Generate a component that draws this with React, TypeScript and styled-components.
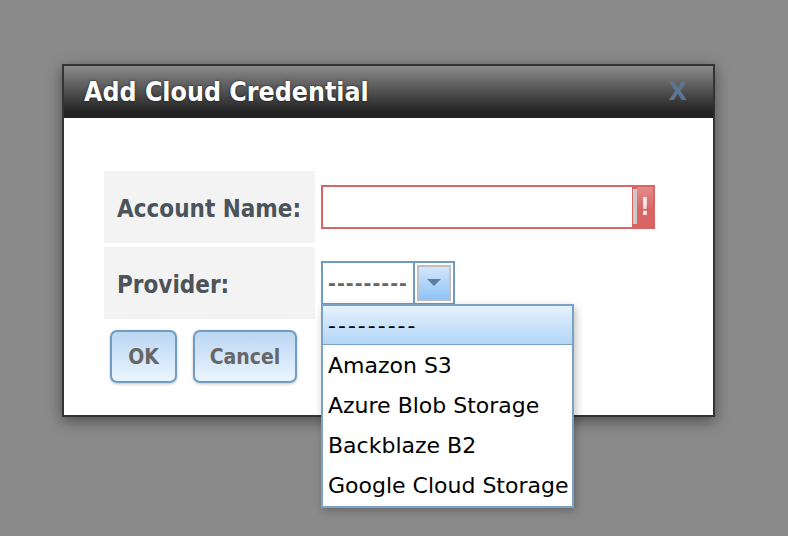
import React from "react";
import styled, { createGlobalStyle } from "styled-components";

const Global = createGlobalStyle`
  html, body { margin: 0; padding: 0; background: #8a8a8a; }
  body { font-family: "DejaVu Sans", Verdana, sans-serif; }
  #root { width: 788px; height: 536px; overflow: hidden; }
`;

const Page = styled.div`
  width: 788px;
  height: 536px;
  background: #8a8a8a;
  padding: 64px 0 0 62px;
  box-sizing: border-box;
`;

const Dialog = styled.div`
  width: 653px;
  height: 353px;
  box-sizing: border-box;
  border: 2px solid #333;
  background: #fff;
  box-shadow: 0 4px 14px rgba(0, 0, 0, 0.45);
  display: flex;
  flex-direction: column;
`;

const TitleBar = styled.div`
  height: 52px;
  flex: none;
  background: linear-gradient(#8a8a8a 0%, #4a4a4a 55%, #232323 88%, #222 100%);
  display: flex;
  align-items: center;
  justify-content: space-between;
  padding: 0 26px 2px 20px;
  box-sizing: border-box;
`;

const Title = styled.h1`
  margin: 0;
  font-family: "DejaVu Sans Condensed", "DejaVu Sans", sans-serif;
  font-weight: bold;
  font-size: 26.5px;
  color: #fff;
  text-shadow: 0 0 2px rgba(0, 0, 0, 0.9);
`;

const Close = styled.span`
  font-family: "DejaVu Sans", sans-serif;
  font-weight: bold;
  font-size: 24px;
  color: #5b7691;
  filter: blur(0.7px);
  margin-top: 2px;
`;

const Body = styled.div`
  flex: 1;
  padding: 53px 0 0 40px;
  position: relative;
`;

const Form = styled.div`
  display: grid;
  grid-template-columns: 211px auto;
  row-gap: 4px;
  align-items: center;
`;

const LabelCell = styled.div`
  background: #f3f3f3;
  height: 72px;
  box-sizing: border-box;
  display: flex;
  align-items: center;
  padding: 3px 0 0 13px;
  font-family: "DejaVu Sans Condensed", "DejaVu Sans", sans-serif;
  font-weight: bold;
  font-size: 24px;
  color: #4b535b;
`;

const FieldCell = styled.div`
  padding-left: 6px;
  height: 72px;
  display: flex;
  align-items: center;
  position: relative;
`;

const TextInput = styled.div`
  width: 334px;
  height: 44px;
  box-sizing: border-box;
  border: 2px solid #d86464;
  display: flex;
  background: #fff;
`;

const InputArea = styled.div`
  flex: 1;
`;

const ErrorTab = styled.div`
  width: 21px;
  background: #d86464;
  display: flex;
  align-items: stretch;
`;

const ErrorGrip = styled.div`
  width: 4px;
  margin: 2px 0 3px 1px;
  background: #c9c9c9;
`;

const ErrorMark = styled.div`
  flex: 1;
  color: #fff;
  font-family: "DejaVu Sans Condensed", "DejaVu Sans", sans-serif;
  font-weight: bold;
  font-size: 24px;
  display: flex;
  align-items: center;
  justify-content: center;
  opacity: 0.85;
  background: linear-gradient(rgba(255,255,255,0.3), rgba(255,255,255,0) 60%);
`;

const SelectBox = styled.div`
  width: 134px;
  height: 44px;
  box-sizing: border-box;
  border: 2px solid #6f9cc0;
  display: flex;
  background: #fff;
  align-self: flex-start;
  margin-top: 14px;
`;

const SelectText = styled.div`
  flex: 1;
  display: flex;
  align-items: center;
  padding-left: 5px;
  font-family: "DejaVu Sans", sans-serif;
  font-weight: bold;
  font-size: 19px;
  color: #666;
  letter-spacing: 1px;
  overflow: hidden;
`;

const SelectButton = styled.div`
  width: 40px;
  border-left: 2px solid #6f9cc0;
  box-sizing: border-box;
  padding: 2px;
  display: flex;
`;

const SelectButtonInner = styled.div`
  flex: 1;
  border: 2px solid #c0c0c0;
  background: linear-gradient(#d4e7fb, #8fc3f7);
  display: flex;
  align-items: center;
  justify-content: center;
`;

const Menu = styled.ul`
  position: absolute;
  left: 6px;
  top: 57px;
  width: 253px;
  box-sizing: border-box;
  margin: 0;
  padding: 0 0 1px 0;
  list-style: none;
  background: #fff;
  border: 2px solid #7aa2c6;
  box-shadow: 2px 3px 8px rgba(0, 0, 0, 0.25);
  z-index: 5;
`;

const MenuItem = styled.li<{ $active?: boolean }>`
  height: ${(p) => (p.$active ? "38px" : "40px")};
  display: flex;
  align-items: center;
  padding-left: 5px;
  font-family: "DejaVu Sans", sans-serif;
  font-size: 22px;
  color: #000;
  white-space: nowrap;
  letter-spacing: ${(p) => (p.$active ? "2px" : "0")};
  background: ${(p) => (p.$active ? "linear-gradient(#e4f1fd, #b3d6f8)" : "#fff")};
  border-bottom: ${(p) => (p.$active ? "1px solid #7aa2c6" : "none")};
`;

const Buttons = styled.div`
  display: flex;
  gap: 16px;
  padding: 11px 0 0 6px;
`;

const Button = styled.button<{ $w: number }>`
  width: ${(p) => p.$w}px;
  height: 53px;
  box-sizing: border-box;
  border: 2px solid #6f9cc0;
  border-radius: 7px;
  background: linear-gradient(#bbd7f2, #eaf4fe);
  font-family: "DejaVu Sans Condensed", "DejaVu Sans", sans-serif;
  font-weight: bold;
  font-size: 21px;
  color: #666;
  box-shadow: 0 1px 3px rgba(0, 0, 0, 0.25);
  padding: 0;
`;

export default function App() {
  return (
    <Page>
      <Global />
      <Dialog>
        <TitleBar>
          <Title>Add Cloud Credential</Title>
          <Close>X</Close>
        </TitleBar>
        <Body>
          <Form>
            <LabelCell>Account Name:</LabelCell>
            <FieldCell>
              <TextInput>
                <InputArea />
                <ErrorTab>
                  <ErrorGrip />
                  <ErrorMark>!</ErrorMark>
                </ErrorTab>
              </TextInput>
            </FieldCell>
            <LabelCell>Provider:</LabelCell>
            <FieldCell>
              <SelectBox>
                <SelectText>---------</SelectText>
                <SelectButton>
                  <SelectButtonInner>
                    <svg width="14" height="8" viewBox="0 0 14 8">
                      <path d="M0 0 H14 L7 7 Z" fill="#5a7fa3" />
                    </svg>
                  </SelectButtonInner>
                </SelectButton>
              </SelectBox>
              <Menu>
                <MenuItem $active>---------</MenuItem>
                <MenuItem>Amazon S3</MenuItem>
                <MenuItem>Azure Blob Storage</MenuItem>
                <MenuItem>Backblaze B2</MenuItem>
                <MenuItem>Google Cloud Storage</MenuItem>
              </Menu>
            </FieldCell>
          </Form>
          <Buttons>
            <Button $w={67}>OK</Button>
            <Button $w={104}>Cancel</Button>
          </Buttons>
        </Body>
      </Dialog>
    </Page>
  );
}
